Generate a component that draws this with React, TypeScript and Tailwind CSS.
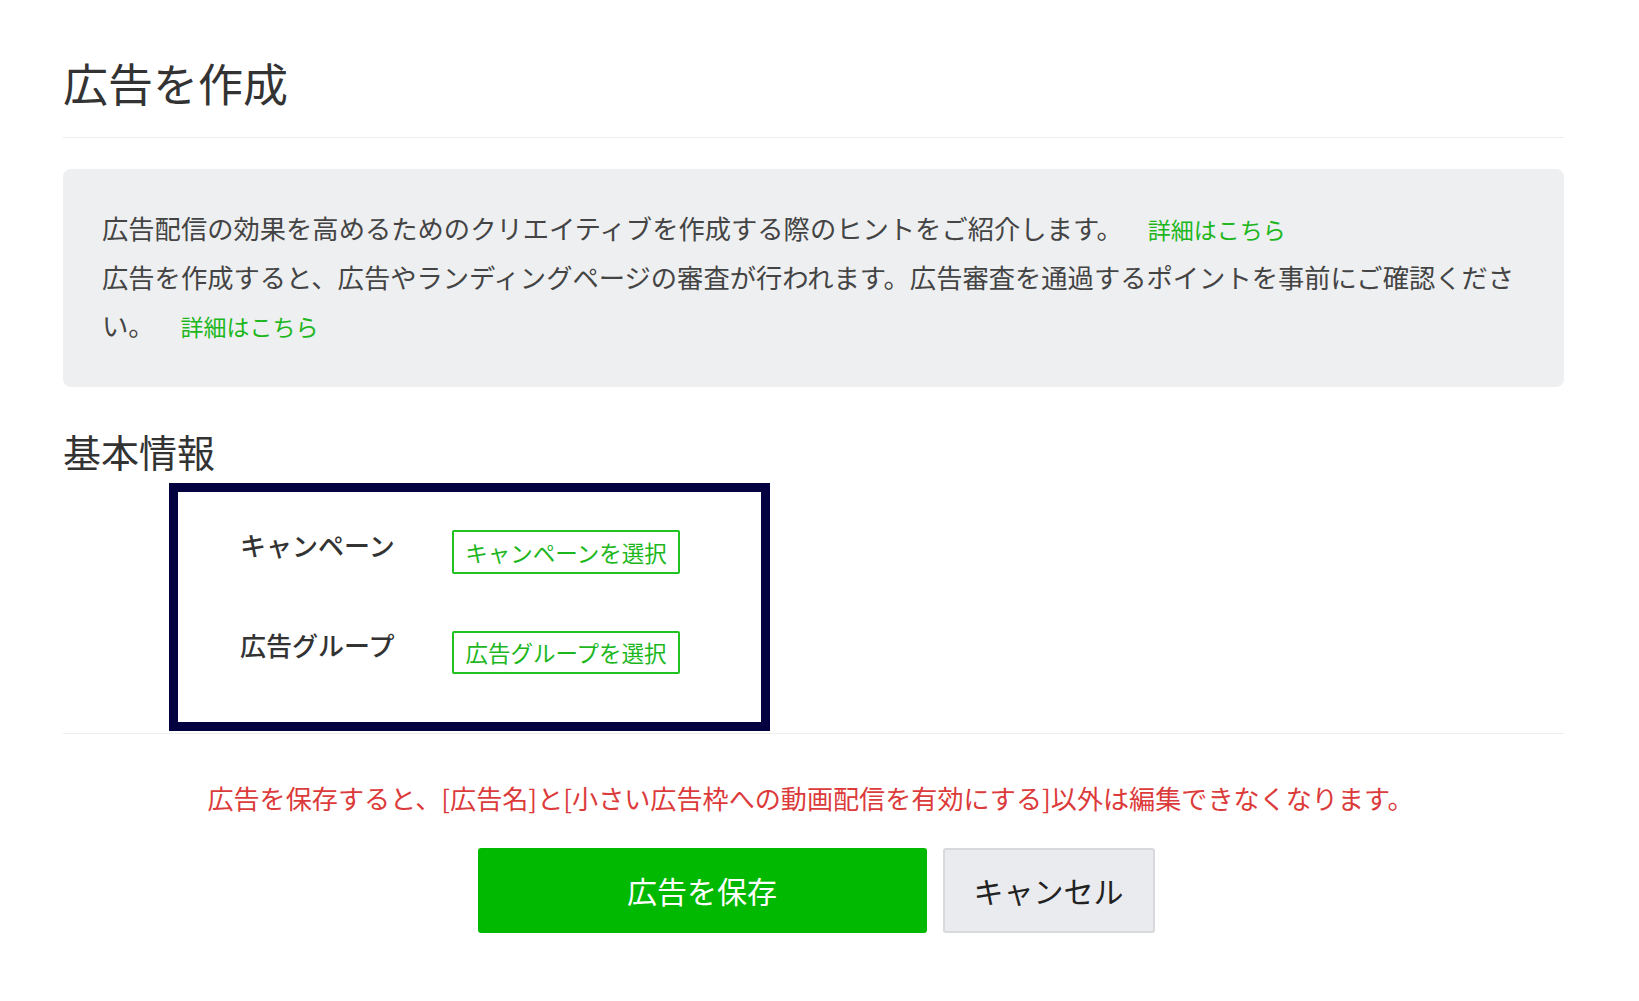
export default function App() {
  const font = { fontFamily: '"Noto Sans CJK JP", "Noto Sans", sans-serif' }

  return (
    <div className="min-h-screen bg-white" style={font}>
      <div className="ml-[63px] w-[1501px]">
        {/* タイトル */}
        <h1 className="pt-[60px] pb-[32px] border-b border-[#eeeeee] text-[45px] leading-[45px] text-[#333333] font-normal">
          広告を作成
        </h1>

        {/* ヒント */}
        <div className="mt-[31px] rounded-lg bg-[#eeeff1] pt-[35px] pb-[37px] px-[39px] text-[26.3px] leading-[48px] text-[#444444]">
          <p>
            広告配信の効果を高めるためのクリエイティブを作成する際のヒントをご紹介します。
            <a className="ml-[25px] text-[23px] text-[#1db71d]">詳細はこちら</a>
          </p>
          <p className="whitespace-nowrap">広告を作成すると、広告やランディングページの審査が行われます。広告審査を通過するポイントを事前にご確認くださ</p>
          <p>
            い。
            <a className="ml-[26px] text-[23px] text-[#1db71d]">詳細はこちら</a>
          </p>
        </div>

        {/* 基本情報 */}
        <h2 className="mt-[45px] text-[38px] leading-[38px] text-[#333333] font-normal">基本情報</h2>

        <div className="mt-[13px] ml-[106px] w-[601px] h-[248px] border-[9px] border-[#03013f] pt-[38px] pl-[62px]">
          <div className="flex items-start">
            <div className="w-[212px] mt-[2px] text-[26px] leading-[26px] font-medium text-[#333333]">キャンペーン</div>
            <button className="h-[44px] w-[228px] border-2 border-[#1fc21f] rounded-[2px] bg-white text-[22.5px] leading-none text-[#1db71d]">
              キャンペーンを選択
            </button>
          </div>
          <div className="flex items-start mt-[57px]">
            <div className="w-[212px] mt-[1px] text-[26px] leading-[26px] font-medium text-[#333333]">広告グループ</div>
            <button className="h-[43px] w-[228px] border-2 border-[#1fc21f] rounded-[2px] bg-white text-[22.5px] leading-none text-[#1db71d]">
              広告グループを選択
            </button>
          </div>
        </div>

        <div className="mt-[2px] border-t border-[#eeeeee]" />

        {/* 保存 */}
        <p className="mt-[51px] text-center text-[26.1px] leading-[26px] text-[#dc3b3b] pr-[6px]">
          広告を保存すると、[広告名]と[小さい広告枠への動画配信を有効にする]以外は編集できなくなります。
        </p>

        <div className="mt-[37px] flex justify-center gap-4 pl-[5px]">
          <button className="h-[85px] w-[449px] rounded-[3px] bg-[#00b900] text-[30px] text-white">
            広告を保存
          </button>
          <button className="h-[85px] w-[212px] rounded-[3px] border-2 border-[#d7d9dd] bg-[#e9ebee] text-[30px] text-[#222222]">
            キャンセル
          </button>
        </div>
      </div>
    </div>
  )
}
